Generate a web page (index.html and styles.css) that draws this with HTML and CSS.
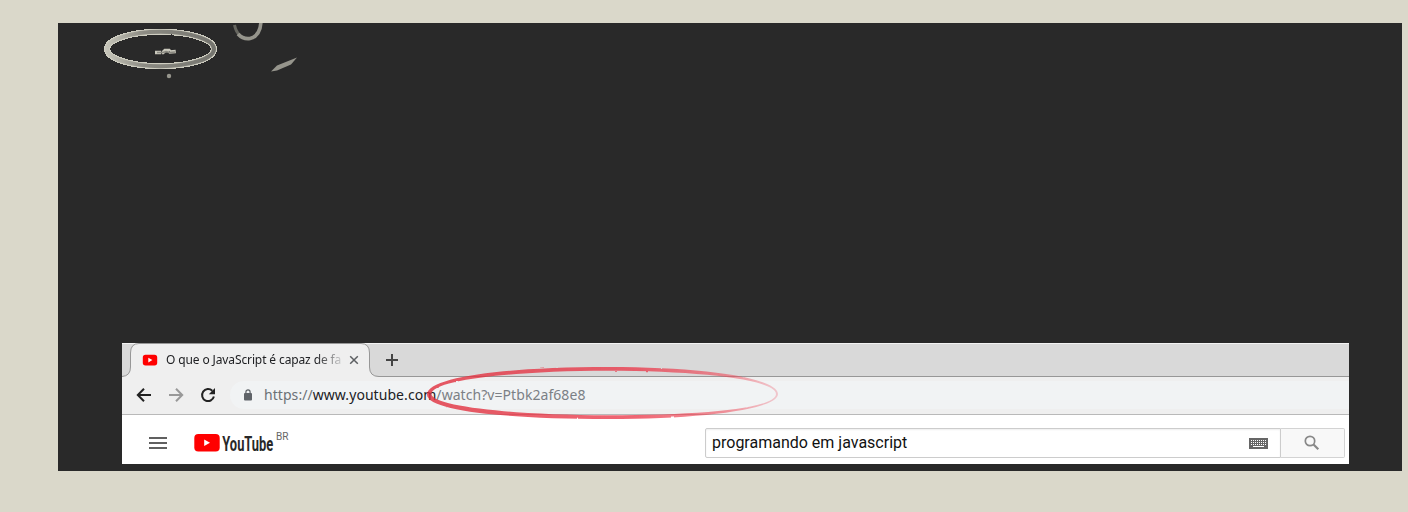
FILE: index.html
```html
<!DOCTYPE html>
<html lang="pt-BR">
<head>
<meta charset="utf-8">
<title>O que o JavaScript é capaz de fazer</title>
<link rel="stylesheet" href="styles.css">
</head>
<body>
<main class="stage">
  <svg class="marks" width="260" height="80" viewBox="58 23 260 80" fill="none">
    <defs>
      <linearGradient id="ring" x1="104" x2="217" y1="0" y2="0" gradientUnits="userSpaceOnUse">
        <stop offset="0" stop-color="#c9c8bc"/><stop offset=".35" stop-color="#8c8b83"/><stop offset="1" stop-color="#73736d"/>
      </linearGradient>
      <filter id="soft"><feGaussianBlur stdDeviation=".65"/></filter>
      <filter id="jagged"><feTurbulence type="fractalNoise" baseFrequency=".3" numOctaves="1" seed="3"/><feDisplacementMap in="SourceGraphic" scale="1.600" xChannelSelector="R" yChannelSelector="G"/></filter>
      <filter id="smudge"><feGaussianBlur stdDeviation=".5"/></filter>
    </defs>
    <ellipse class="ring-edge" filter="url(#jagged)" cx="160.500" cy="49" rx="53.500" ry="17.200"/>
    <ellipse filter="url(#smudge)" cx="160.500" cy="49" rx="53.500" ry="17.200" stroke="url(#ring)" stroke-width="4"/>
    <path class="scribble-edge" d="M155 52.500H163L165 50.500H169L170 52L176 51.500"/>
    <path class="scribble" d="M157 52.500H163L166 51.500L170 52.500L175 52"/>
    <g filter="url(#soft)">
      <circle cx="169" cy="76" r="2.200" fill="#97968d"/>
      <path d="M234.500 25Q236 32 240 35.500" stroke="#66665f" stroke-width="3"/>
      <path d="M238 34Q243 39.500 250 38.500Q260 36 261 22" stroke="#96958c" stroke-width="3.600"/>
      <path d="M271 71.500L277 65.500L297 57.500L291 64.500L277 70.500Z" fill="#96958c"/>
    </g>
  </svg>

  <section class="browser">
    <div class="tabstrip">
      <svg class="tab-shape" width="258" height="34" viewBox="0 0 258 34">
        <path d="M0 33.500Q8.500 33 8.500 24V10Q8.500 .5 17 .5H239Q247.500 .5 247.500 10V24Q247.500 33.500 257 33.500V34H0Z" fill="#efefef"/>
        <path d="M0 33.500Q8.500 33 8.500 24V10Q8.500 .5 17 .5H239Q247.500 .5 247.500 10V24Q247.500 33.500 257 33.500" fill="none" stroke="#979797"/>
      </svg>
      <div class="tab">
        <svg class="favicon" width="16" height="12" viewBox="0 0 16 12"><rect x=".8" y=".8" width="14.400" height="10.600" rx="2.700" fill="#f00"/><path d="M6.300 3.700V8.500L10.400 6.100Z" fill="#fff"/></svg>
        <span class="tab-title">O que o JavaScript é capaz de fazer</span>
        <svg class="close" width="10" height="10" viewBox="0 0 10 10"><path d="M1.200 1.200L8.800 8.800M8.800 1.200L1.200 8.800" stroke="#5c5f62" stroke-width="1.500"/></svg>
      </div>
      <svg class="plus" width="12" height="12" viewBox="0 0 12 12"><path d="M6 0V12M0 6H12" stroke="#444" stroke-width="2"/></svg>
    </div>
    <div class="toolbar">
      <svg class="nav" width="16" height="16" viewBox="0 0 16 16"><path d="M15 8H2.500M8 1.700L1.800 8L8 14.300" fill="none" stroke="#222" stroke-width="2"/></svg>
      <svg class="nav" width="16" height="16" viewBox="0 0 16 16"><path d="M1 8H13.500M8 1.700L14.200 8L8 14.300" fill="none" stroke="#999" stroke-width="2"/></svg>
      <svg class="nav" width="16" height="16" viewBox="0 0 16 16"><path d="M13.900 9.600A6 6 0 1 1 12.300 3.800" fill="none" stroke="#222" stroke-width="2"/><path d="M15 1V7.200H8.800Z" fill="#222"/></svg>
      <div class="omnibox">
        <svg class="lock" width="8" height="12" viewBox="0 0 8 12"><rect y="4" width="8" height="7.500" rx="1" fill="#5f6368"/><path d="M1.900 5V2.900a2.100 2.100 0 0 1 4.200 0V5" fill="none" stroke="#5f6368" stroke-width="1.200"/></svg>
        <span class="url"><span class="scheme">https://</span><span class="host">www.youtube.com</span><span class="path">/watch?v=Ptbk2af68e8</span></span>
      </div>
    </div>
    <div class="masthead">
      <svg class="menu" width="18" height="12" viewBox="0 0 18 12"><path d="M0 1H18M0 6H18M0 11H18" stroke="#606060" stroke-width="2"/></svg>
      <svg class="logo" width="98" height="28" viewBox="0 0 98 28">
        <rect x=".3" y="6" width="25.400" height="17.600" rx="4" fill="#f00"/>
        <path d="M10.200 11.500V18L16 14.800Z" fill="#fff"/>
        <text class="wordmark" x="28.300" y="22.600" textLength="51" lengthAdjust="spacingAndGlyphs">YouTube</text>
        <text class="region" x="82" y="11.700" textLength="12.500" lengthAdjust="spacingAndGlyphs">BR</text>
      </svg>
      <div class="search">
        <div class="field">
          <span class="query">programando em javascript</span>
          <svg class="keyboard" width="19" height="11" viewBox="0 0 19 11"><path d="M0 0H19V11H0Z" fill="#666"/><path d="M2 2.500H18M2 4.500H18M2 6.500H18" stroke="#fff" stroke-dasharray="1 1"/><path d="M4 8.500H15" stroke="#fff"/></svg>
        </div>
        <div class="go"><svg width="16" height="16" viewBox="0 0 16 16"><circle cx="6" cy="6" r="4.700" fill="none" stroke="#888" stroke-width="1.700"/><path d="M9.500 9.500L14.300 14.300" stroke="#888" stroke-width="2.200"/></svg></div>
      </div>
    </div>
  </section>

  <svg class="highlight" width="360" height="60" viewBox="422 363 360 60" fill="none">
    <defs>
      <linearGradient id="red" x1="428" x2="778" y1="0" y2="0" gradientUnits="userSpaceOnUse">
        <stop offset="0" stop-color="#e02f3d" stop-opacity=".8"/><stop offset=".6" stop-color="#ea3345" stop-opacity=".75"/><stop offset=".85" stop-color="#ee4050" stop-opacity=".55"/><stop offset="1" stop-color="#ee6070" stop-opacity=".3"/>
      </linearGradient>
      <filter id="chalk" x="-5%" y="-20%" width="110%" height="140%" color-interpolation-filters="sRGB"><feTurbulence type="fractalNoise" baseFrequency=".2" numOctaves="1" seed="4"/><feDisplacementMap in="SourceGraphic" scale="2" xChannelSelector="R" yChannelSelector="G"/><feGaussianBlur stdDeviation=".45"/></filter>
    </defs>
    <path filter="url(#chalk)" fill="url(#red)" fill-rule="evenodd" d="M427 394.500C427 377 505 367 608 367C705 367 778 378 778 394C778 409 704 419 608 419C507 419 427 411 427 394.500ZM431.500 394C431.500 406 512 415.200 608 415.200C706 415.200 776 408 776 394C776 380 702 370.800 608 370.800C514 370.800 431.500 380 431.500 394Z"/>
  </svg>
</main>
</body>
</html>
```
FILE: styles.css
```css
* { box-sizing: border-box; }
body {
  margin: 0;
  height: 512px;
  padding: 23px 6px 41px 58px;
  background: #dad8ca;
  overflow: hidden;
}
svg { display: block; flex: none; }
.stage {
  position: relative;
  height: 448px;
  padding: 320px 53px 7px 64px;
  background: #292929;
}
.marks { position: absolute; left: 0; top: 0; }
.ring-edge { stroke: #cfcec1; stroke-width: 6.2; shape-rendering: crispEdges; }
.scribble-edge { stroke: #c9c8bc; stroke-width: 3.5; stroke-dasharray: 6 .8 9 .6; }
.scribble { stroke: #8a8981; stroke-width: 1.4; }
.highlight { position: absolute; left: 364px; top: 340px; }

.browser { height: 121px; background: #fff; }
.tabstrip {
  position: relative;
  display: flex;
  align-items: center;
  height: 34px;
  background: #d9d9d9;
  border-top: 1px solid #f3f3f3;
  border-bottom: 1px solid #979797;
}
.tab-shape { position: absolute; left: 0; top: -1px; }
.tab {
  position: relative;
  display: flex;
  align-items: center;
  width: 248px;
  padding-left: 20px;
}
.tab-title {
  width: 175px;
  margin-left: 8px;
  overflow: hidden;
  white-space: nowrap;
  font: 12px/18px "Noto Sans", sans-serif;
  letter-spacing: -.12px;
  color: #202124;
  -webkit-mask-image: linear-gradient(90deg, #000 150px, transparent 180px);
  mask-image: linear-gradient(90deg, #000 150px, transparent 180px);
}
.close { margin-left: 8px; }
.plus { margin-left: 16px; }

.toolbar {
  display: flex;
  align-items: center;
  height: 38px;
  padding: 0 0 1px 14px;
  background: #efefef;
  border-bottom: 1px solid #b9b9b9;
}
.nav { margin-right: 16px; }
.omnibox {
  display: flex;
  align-items: center;
  flex: 1;
  height: 28px;
  margin-left: -2px;
  padding-left: 14px;
  border-radius: 14px 0 0 14px;
  background: #f1f3f4;
}
.lock { margin-top: -1px; }
.url {
  margin: -1px 0 0 12px;
  white-space: nowrap;
  font: 14px/20px "Noto Sans", sans-serif;
  letter-spacing: .06px;
  color: #7b8085;
}
.host { color: #202124; }
.scheme { color: #6b7177; }

.masthead {
  display: flex;
  align-items: flex-start;
  height: 49px;
  padding: 13px 4px 0 27px;
}
.menu { margin-top: 9px; }
.logo { margin-left: 27px; }
.wordmark { font: bold 20px Roboto, sans-serif; fill: #282828; }
.region { font: 11px Roboto, sans-serif; fill: #666; }
.search { display: flex; width: 640px; height: 30px; margin-left: auto; }
.field {
  display: flex;
  align-items: center;
  flex: 1;
  padding: 0 12px 0 6px;
  border: 1px solid #ccc;
  border-radius: 2px 0 0 2px;
  box-shadow: inset 0 1px 2px #eee;
}
.query {
  flex: 1;
  font: 16px/24px Roboto, sans-serif;
  color: #111;
}
.go {
  display: flex;
  align-items: center;
  justify-content: center;
  width: 64px;
  padding-right: 2px;
  border: 1px solid #d3d3d3;
  border-left: 0;
  border-radius: 0 2px 2px 0;
  background: #f8f8f8;
}
```
